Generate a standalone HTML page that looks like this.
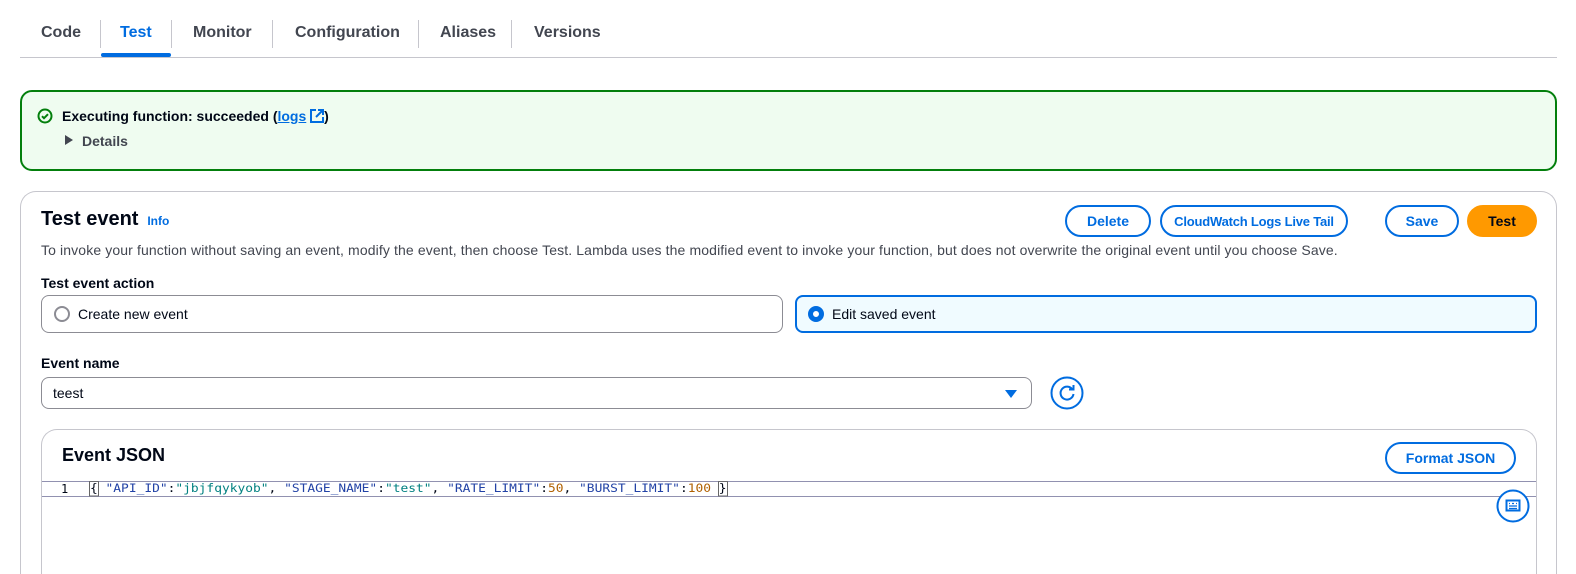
<!DOCTYPE html>
<html><head><style>
*{box-sizing:border-box;margin:0;padding:0}
html,body{width:1576px;height:574px;overflow:hidden}
body{background:#fff;font-family:"Liberation Sans",sans-serif;color:#000716;position:relative;font-size:14px}
.a{position:absolute}
.tab{position:absolute;top:24px;font-weight:bold;font-size:16px;color:#424650}
.sep{position:absolute;top:20px;width:1px;height:28px;background:#c6c6cd}
.btn{position:absolute;border:2px solid #006ce0;border-radius:20px;color:#006ce0;font-weight:bold;font-size:14px;display:flex;align-items:center;justify-content:center;background:#fff;white-space:nowrap}
.lbl{position:absolute;font-weight:bold;font-size:14px;color:#000716}
.radio{position:absolute;width:16px;height:16px;border-radius:50%;border:2px solid #8c8c94}
</style></head><body>
<div class="tab" style="left:41px">Code</div>
<div class="tab" style="left:120px;color:#006ce0">Test</div>
<div class="tab" style="left:193px">Monitor</div>
<div class="tab" style="left:295px">Configuration</div>
<div class="tab" style="left:440px">Aliases</div>
<div class="tab" style="left:534px">Versions</div>
<div class="sep" style="left:100px"></div><div class="sep" style="left:171px"></div><div class="sep" style="left:272px"></div><div class="sep" style="left:418px"></div><div class="sep" style="left:511px"></div>
<div class="a" style="left:20px;top:57px;width:1537px;height:1px;background:#c6c6cd"></div>
<div class="a" style="left:101px;top:53px;width:70px;height:4px;border-radius:2px;background:#006ce0"></div>

<div class="a" style="left:20px;top:90px;width:1537px;height:81px;border:2px solid #037f0c;border-radius:12px;background:#effcf0"></div>
<svg class="a" style="left:37px;top:108px" width="16" height="16" viewBox="0 0 16 16"><circle cx="8" cy="8" r="6.5" fill="none" stroke="#037f0c" stroke-width="2"/><path d="M5 8.2l2 2 4-4" fill="none" stroke="#037f0c" stroke-width="2"/></svg>
<div class="a" style="left:62px;top:108px;font-weight:bold;font-size:14px">Executing function: succeeded (<span style="color:#006ce0;text-decoration:underline">logs</span> <svg width="14" height="14" viewBox="0 0 14 14" style="vertical-align:-2px"><path d="M6 1H1v12h12V8M8 1h5v5M13 1L6 8" fill="none" stroke="#006ce0" stroke-width="2"/></svg>)</div>
<div class="a" style="left:65px;top:135px;width:0;height:0;border-left:8px solid #424650;border-top:5px solid transparent;border-bottom:5px solid transparent"></div>
<div class="a" style="left:82px;top:133px;font-weight:bold;color:#424650">Details</div>

<div class="a" style="left:20px;top:191px;width:1537px;height:383px;border:1px solid #c6c6cd;border-bottom:none;border-radius:16px 16px 0 0;background:#fff"></div>
<div class="a" style="left:41px;top:208px;font-weight:bold;font-size:20px">Test event <span style="font-size:12px;color:#006ce0">&nbsp;Info</span></div>
<div class="btn" style="left:1065px;top:205px;width:86px;height:32px">Delete</div>
<div class="btn" style="left:1160px;top:205px;width:188px;height:32px;font-size:13px;letter-spacing:-0.2px">CloudWatch Logs Live Tail</div>
<div class="btn" style="left:1385px;top:205px;width:74px;height:32px">Save</div>
<div class="btn" style="left:1467px;top:205px;width:70px;height:32px;background:#ff9900;border-color:#ff9900;color:#000716">Test</div>
<div class="a" style="left:41px;top:242px;color:#424650;letter-spacing:0.12px">To invoke your function without saving an event, modify the event, then choose Test. Lambda uses the modified event to invoke your function, but does not overwrite the original event until you choose Save.</div>
<div class="lbl" style="left:41px;top:275px">Test event action</div>
<div class="a" style="left:41px;top:295px;width:742px;height:38px;border:1px solid #8c8c94;border-radius:8px"></div>
<div class="radio" style="left:54px;top:306px"></div>
<div class="a" style="left:78px;top:306px;color:#000716">Create new event</div>
<div class="a" style="left:795px;top:295px;width:742px;height:38px;border:2px solid #006ce0;border-radius:8px;background:#f0fbff"></div>
<div class="radio" style="left:808px;top:306px;border:5px solid #006ce0;background:#fff"></div>
<div class="a" style="left:832px;top:306px">Edit saved event</div>
<div class="lbl" style="left:41px;top:355px">Event name</div>
<div class="a" style="left:41px;top:377px;width:991px;height:32px;border:1px solid #8c8c94;border-radius:8px"></div>
<div class="a" style="left:53px;top:385px">teest</div>
<div class="a" style="left:1005px;top:390px;border-top:8px solid #006ce0;border-left:6px solid transparent;border-right:6px solid transparent"></div>
<svg class="a" style="left:1050px;top:376px" width="34" height="34" viewBox="0 0 34 34"><circle cx="17" cy="17" r="15.5" fill="#fff" stroke="#006ce0" stroke-width="2"/><path d="M22.5 13.5A6.5 6.5 0 1 0 23.5 18" fill="none" stroke="#006ce0" stroke-width="2"/><path d="M19 13.5h4.5V9" fill="none" stroke="#006ce0" stroke-width="2"/></svg>

<div class="a" style="left:41px;top:429px;width:1496px;height:145px;border:1px solid #c6c6cd;border-bottom:none;border-radius:16px 16px 0 0;background:#fff"></div>
<div class="a" style="left:62px;top:445px;font-weight:bold;font-size:18px">Event JSON</div>
<div class="btn" style="left:1385px;top:442px;width:131px;height:32px">Format JSON</div>
<div class="a" style="left:42px;top:481px;width:1494px;height:1px;background:#9191b0"></div>
<div class="a" style="left:42px;top:496px;width:1494px;height:1px;background:#9191b0"></div>
<div class="a" style="left:61px;top:482px;font-family:'DejaVu Sans Mono',monospace;font-size:12px;line-height:14px;color:#000716;white-space:pre">1</div>
<div class="a" style="left:90px;top:482px;font-family:'DejaVu Sans Mono',monospace;font-size:12.9px;line-height:15px;white-space:pre;transform:scaleY(0.9);transform-origin:top left"><span style="outline:1px solid #666">{</span> <span style="color:#2242a6">"API_ID"</span>:<span style="color:#008080">"jbjfqykyob"</span>, <span style="color:#2242a6">"STAGE_NAME"</span>:<span style="color:#008080">"test"</span>, <span style="color:#2242a6">"RATE_LIMIT"</span>:<span style="color:#b06000">50</span>, <span style="color:#2242a6">"BURST_LIMIT"</span>:<span style="color:#b06000">100</span> <span style="outline:1px solid #666">}</span></div>
<svg class="a" style="left:1496px;top:489px" width="34" height="34" viewBox="0 0 34 34"><circle cx="17" cy="17" r="15.5" fill="#fff" stroke="#006ce0" stroke-width="2"/><rect x="10.5" y="11.5" width="13" height="10" fill="none" stroke="#006ce0" stroke-width="2"/><path d="M13 14.5h1M16 14.5h2M20 14.5h1M13 17h8M13 19.5h8" stroke="#006ce0" stroke-width="1.3"/></svg>
</body></html>
